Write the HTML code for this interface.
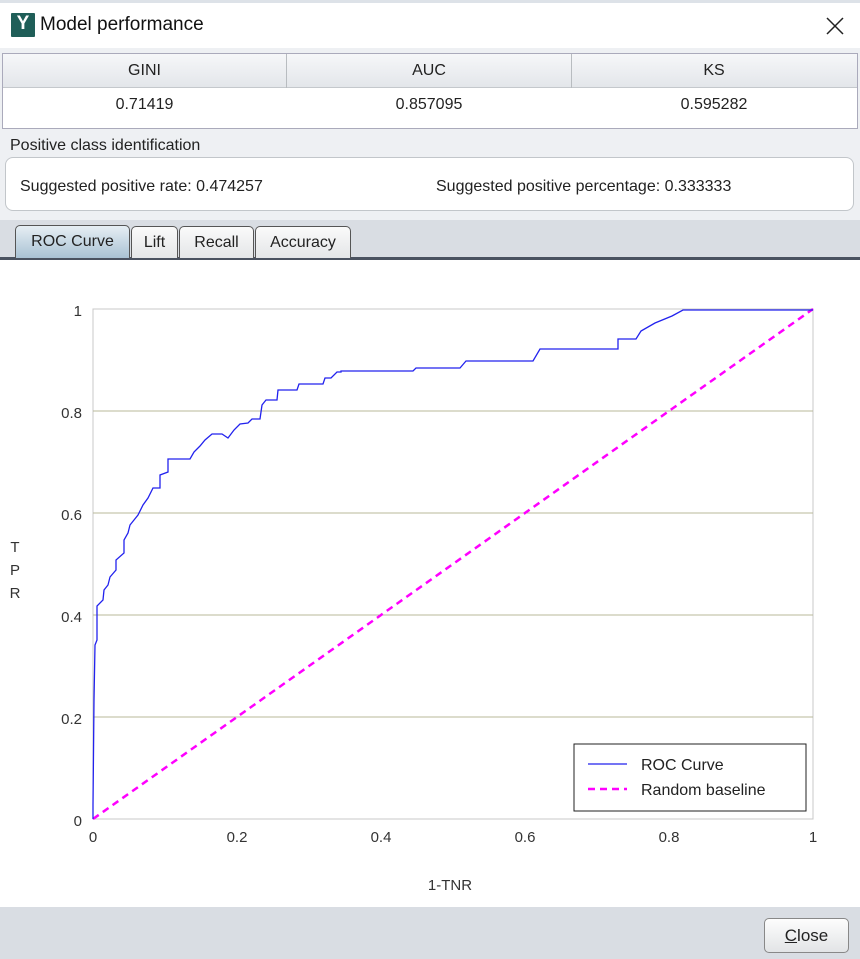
<!DOCTYPE html>
<html><head><meta charset="utf-8"><style>
*{margin:0;padding:0;box-sizing:border-box}
body{width:860px;height:959px;background:#fff;font-family:"Liberation Sans",Arial,sans-serif;color:#222;position:relative;overflow:hidden}
.abs{position:absolute}
</style></head><body>
<div class="abs" style="left:0;top:0;width:860px;height:3px;background:#dde2e8"></div>
<div class="abs" style="left:11px;top:13px;width:24px;height:24px;background:#1f5e58;border-radius:1px;color:#fff;font-weight:bold;font-size:19px;text-align:center;line-height:22px">Y</div>
<div class="abs" style="left:40px;top:14px;font-size:19px;color:#111">Model performance</div>
<svg class="abs" style="left:826px;top:17px" width="18" height="18"><path d="M1 1L17 17M17 1L1 17" stroke="#222" stroke-width="1.5"/></svg>
<div class="abs" style="left:0;top:48px;width:860px;height:172px;background:#eef0f3"></div>
<div class="abs" style="left:2px;top:53px;width:856px;height:76px;border:1px solid #aab;background:#fff"></div>
<div class="abs" style="left:3px;top:54px;width:854px;height:34px;background:linear-gradient(#f6f7f9,#e3e6ea);border-bottom:1px solid #c4c8cc"></div>
<div class="abs" style="left:286px;top:54px;width:1px;height:34px;background:#b8bcc0"></div>
<div class="abs" style="left:571px;top:54px;width:1px;height:34px;background:#b8bcc0"></div>
<div class="abs" style="left:3px;top:62px;width:283px;text-align:center;font-size:16px">GINI</div>
<div class="abs" style="left:287px;top:62px;width:284px;text-align:center;font-size:16px">AUC</div>
<div class="abs" style="left:572px;top:62px;width:284px;text-align:center;font-size:16px">KS</div>
<div class="abs" style="left:3px;top:96px;width:283px;text-align:center;font-size:16px">0.71419</div>
<div class="abs" style="left:287px;top:96px;width:284px;text-align:center;font-size:16px">0.857095</div>
<div class="abs" style="left:572px;top:96px;width:284px;text-align:center;font-size:16px">0.595282</div>
<div class="abs" style="left:10px;top:137px;font-size:16px">Positive class identification</div>
<div class="abs" style="left:5px;top:157px;width:849px;height:54px;border:1px solid #c2c6ca;border-radius:8px;background:#fff"></div>
<div class="abs" style="left:20px;top:178px;font-size:16px">Suggested positive rate: 0.474257</div>
<div class="abs" style="left:436px;top:178px;font-size:16px">Suggested positive percentage: 0.333333</div>
<div class="abs" style="left:0;top:220px;width:860px;height:38px;background:#d9dde3"></div>
<div class="abs" style="left:0;top:257px;width:860px;height:3px;background:#4a5260"></div>
<div class="abs" style="left:15px;top:225px;width:115px;height:33px;border:1px solid #555;border-bottom:none;border-radius:5px 5px 0 0;background:linear-gradient(#e6eef4,#a9c2d4);font-size:16px;text-align:center;line-height:32px">ROC Curve</div>
<div class="abs" style="left:131px;top:226px;width:47px;height:32px;border:1px solid #555;border-bottom:none;border-radius:5px 5px 0 0;background:linear-gradient(#fafafa,#e4e6e8);font-size:16px;text-align:center;line-height:31px">Lift</div>
<div class="abs" style="left:179px;top:226px;width:75px;height:32px;border:1px solid #555;border-bottom:none;border-radius:5px 5px 0 0;background:linear-gradient(#fafafa,#e4e6e8);font-size:16px;text-align:center;line-height:31px">Recall</div>
<div class="abs" style="left:255px;top:226px;width:96px;height:32px;border:1px solid #555;border-bottom:none;border-radius:5px 5px 0 0;background:linear-gradient(#fafafa,#e4e6e8);font-size:16px;text-align:center;line-height:31px">Accuracy</div>
<svg class="abs" style="left:0;top:0" width="860" height="959" font-family="Liberation Sans,Arial,sans-serif" font-size="15" fill="#333">
<rect x="93" y="309" width="720" height="510" fill="#fff" stroke="#c8c8c8"/>
<g stroke="#b9b89a" stroke-width="1"><line x1="93" y1="411" x2="813" y2="411"/><line x1="93" y1="513" x2="813" y2="513"/><line x1="93" y1="615" x2="813" y2="615"/><line x1="93" y1="717" x2="813" y2="717"/></g>
<g text-anchor="end"><text x="82" y="316">1</text><text x="82" y="418">0.8</text><text x="82" y="520">0.6</text><text x="82" y="622">0.4</text><text x="82" y="724">0.2</text><text x="82" y="826">0</text></g>
<g text-anchor="middle"><text x="93" y="842">0</text><text x="237" y="842">0.2</text><text x="381" y="842">0.4</text><text x="525" y="842">0.6</text><text x="669" y="842">0.8</text><text x="813" y="842">1</text>
<text x="450" y="890">1-TNR</text><text x="15" y="552">T</text><text x="15" y="575">P</text><text x="15" y="598">R</text></g>
<line x1="93" y1="819" x2="813" y2="309" stroke="#f0f" stroke-width="2.5" stroke-dasharray="7,5"/>
<polyline fill="none" stroke="#2222ee" stroke-width="1.3" points="93,819 93,805 94,700 95,645 97,640 97,606 103,600 104,590 108,585 110,577 116,570 116,560 124,553 124,540 128,533 130,525 134,520 138,515 143,505 148,498 153,488 160,488 160,475 168,472 168,459 190,459 194,452 200,446 205,440 212,434 222,434 228,438 234,430 240,424 248,423 252,419 260,419 262,405 266,400 277,400 278,390 297,390 299,384 323,384 325,378 331,378 337,372 341,372 341,371 413,371 416,368 460,368 466,361 533,361 540,349 618,349 618,339 636,339 641,331 655,323 672,316 683,310 813,310"/>
<rect x="574" y="744" width="232" height="67" fill="#fff" stroke="#222"/>
<line x1="588" y1="764" x2="627" y2="764" stroke="#2222ee" stroke-width="1.3"/>
<line x1="588" y1="789" x2="627" y2="789" stroke="#f0f" stroke-width="2.5" stroke-dasharray="7,5"/>
<text x="641" y="770" fill="#222" font-size="16">ROC Curve</text>
<text x="641" y="795" fill="#222" font-size="16">Random baseline</text>
</svg>
<div class="abs" style="left:0;top:907px;width:860px;height:52px;background:#d9dde3"></div>
<div class="abs" style="left:764px;top:918px;width:85px;height:35px;border:1px solid #888;border-radius:5px;background:linear-gradient(#fdfdfd,#e2e4e6);font-size:17px;text-align:center;line-height:33px"><u>C</u>lose</div>
</body></html>
